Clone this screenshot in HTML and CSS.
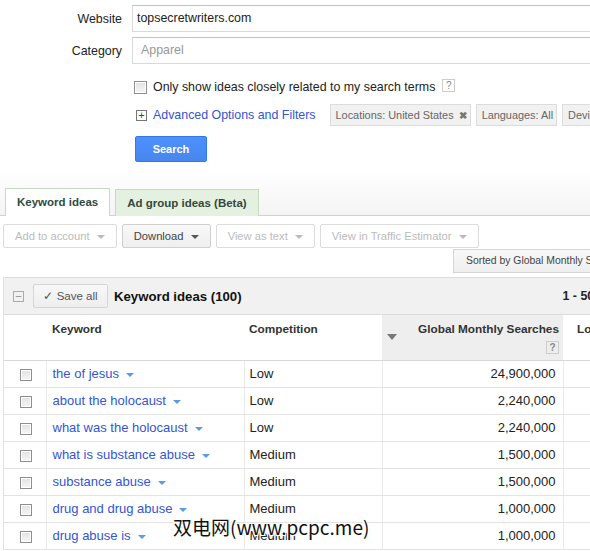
FILE: index.html
```html
<!DOCTYPE html>
<html>
<head>
    <title>Keyword Tool</title>
    <link rel="stylesheet" href="styles.css">
</head>
<body>
    <div class="search-form">
        <div class="form-row">
            <label class="form-label">Website</label>
            <div class="text-box">topsecretwriters.com</div>
        </div>
        <div class="form-row">
            <label class="form-label">Category</label>
            <div class="text-box placeholder">Apparel</div>
        </div>
        <div class="option-row">
            <span class="check big"></span>
            <span>Only show ideas closely related to my search terms</span>
            <span class="help">?</span>
        </div>
        <div class="filter-row">
            <span class="plus-box">+</span>
            <a class="link adv-link">Advanced Options and Filters</a>
            <span class="chip">Locations: United States <b class="chip-x">&#10006;</b></span>
            <span class="chip">Languages: All</span>
            <span class="chip">Devices: All</span>
        </div>
        <button class="search-btn">Search</button>
    </div>

    <div class="tab-bar">
        <div class="tab active">Keyword ideas</div>
        <div class="tab">Ad group ideas (Beta)</div>
    </div>

    <div class="toolbar">
        <span class="tool-btn disabled">Add to account <i class="caret"></i></span>
        <span class="tool-btn raised">Download <i class="caret dark"></i></span>
        <span class="tool-btn disabled">View as text <i class="caret"></i></span>
        <span class="tool-btn disabled">View in Traffic Estimator <i class="caret"></i></span>
    </div>
    <div class="sort-row">
        <span class="sort-btn">Sorted by Global Monthly Searches</span>
    </div>

    <div class="results">
        <div class="results-head">
            <span class="minus-box">&minus;</span>
            <span class="save-btn">&#10003; Save all</span>
            <span class="results-title">Keyword ideas (100)</span>
            <span class="paging">1 - 50 of 100</span>
        </div>
        <table class="grid">
            <tr class="grid-head">
                <th class="c-check"></th>
                <th class="c-kw">Keyword</th>
                <th class="c-comp">Competition</th>
                <th class="c-gms sorted">
                    <i class="sort-arrow"></i>
                    <div>Global Monthly Searches</div>
                    <span class="help small">?</span>
                </th>
                <th class="c-local">Local Monthly Searches</th>
            </tr>
            <tr>
                <td class="c-check"><span class="check"></span></td>
                <td class="c-kw"><a class="link">the of jesus</a><i class="caret blue"></i></td>
                <td class="c-comp">Low</td>
                <td class="c-gms">24,900,000</td>
                <td class="c-local"></td>
            </tr>
            <tr>
                <td class="c-check"><span class="check"></span></td>
                <td class="c-kw"><a class="link">about the holocaust</a><i class="caret blue"></i></td>
                <td class="c-comp">Low</td>
                <td class="c-gms">2,240,000</td>
                <td class="c-local"></td>
            </tr>
            <tr>
                <td class="c-check"><span class="check"></span></td>
                <td class="c-kw"><a class="link">what was the holocaust</a><i class="caret blue"></i></td>
                <td class="c-comp">Low</td>
                <td class="c-gms">2,240,000</td>
                <td class="c-local"></td>
            </tr>
            <tr>
                <td class="c-check"><span class="check"></span></td>
                <td class="c-kw"><a class="link">what is substance abuse</a><i class="caret blue"></i></td>
                <td class="c-comp">Medium</td>
                <td class="c-gms">1,500,000</td>
                <td class="c-local"></td>
            </tr>
            <tr>
                <td class="c-check"><span class="check"></span></td>
                <td class="c-kw"><a class="link">substance abuse</a><i class="caret blue"></i></td>
                <td class="c-comp">Medium</td>
                <td class="c-gms">1,500,000</td>
                <td class="c-local"></td>
            </tr>
            <tr>
                <td class="c-check"><span class="check"></span></td>
                <td class="c-kw"><a class="link">drug and drug abuse</a><i class="caret blue"></i></td>
                <td class="c-comp">Medium</td>
                <td class="c-gms">1,000,000</td>
                <td class="c-local"></td>
            </tr>
            <tr>
                <td class="c-check"><span class="check"></span></td>
                <td class="c-kw"><a class="link">drug abuse is</a><i class="caret blue"></i></td>
                <td class="c-comp">Medium</td>
                <td class="c-gms">1,000,000</td>
                <td class="c-local"></td>
            </tr>
        </table>
    </div>

    <div class="watermark">双电网(www.pcpc.me)</div>
</body>
</html>
```

FILE: styles.css
```css
* {
    box-sizing: border-box;
}
body {
    margin: 0;
    width: 590px;
    height: 551px;
    overflow: hidden;
    position: relative;
    background: #fff;
    color: #222;
    font-family: "Liberation Sans", Arial, sans-serif;
    font-size: 13px;
}
.link {
    color: #3355d6;
    text-decoration: none;
}

/* search form */
.search-form {
    padding-top: 5px;
    height: 170px;
    font-size: 12.4px;
}
.form-row {
    display: flex;
    align-items: center;
    margin-bottom: 5px;
}
.form-label {
    width: 122px;
    flex-shrink: 0;
    text-align: right;
    margin-right: 10px;
    color: #222;
}
.text-box {
    width: 600px;
    height: 27px;
    line-height: 25px;
    border: 1px solid #d9d9d9;
    border-top-color: #c0c0c0;
    padding-left: 4px;
    flex-shrink: 0;
}
.text-box.placeholder {
    color: #999;
    padding-left: 8px;
}
.option-row {
    display: flex;
    align-items: center;
    margin: 16px 0 0 134px;
    height: 14px;
    white-space: nowrap;
}
.check {
    display: inline-block;
    width: 12px;
    height: 12px;
    border: 1px solid #8e8e8e;
    background: linear-gradient(#e2e2e2, #f6f6f6);
    box-shadow: inset 0 0 0 1px #fff;
}
.check.big {
    width: 13px;
    height: 13px;
    margin-right: 6px;
}
.help {
    display: inline-block;
    width: 13px;
    height: 13px;
    line-height: 11px;
    border: 1px solid #ccc;
    color: #888;
    font-size: 10px;
    text-align: center;
    margin-left: 7px;
    margin-top: -3px;
}
.filter-row {
    display: flex;
    align-items: center;
    margin: 10px 0 0 136px;
    white-space: nowrap;
}
.plus-box {
    width: 11px;
    height: 11px;
    border: 1px solid #777;
    font-size: 11px;
    line-height: 8px;
    text-align: center;
    color: #444;
    margin-right: 6px;
    flex-shrink: 0;
}
.adv-link {
    margin-right: 14px;
}
.chip {
    height: 22px;
    line-height: 20px;
    padding: 0 3px 0 5px;
    margin-right: 5px;
    background: #f1f1f1;
    border: 1px solid #dcdcdc;
    color: #666;
    font-size: 10.9px;
    flex-shrink: 0;
}
.chip-x {
    color: #777;
    font-size: 10px;
    margin-left: 2px;
}
.search-btn {
    display: block;
    margin: 10px 0 0 135px;
    width: 72px;
    height: 26px;
    border: 1px solid #3079ed;
    border-radius: 2px;
    background: linear-gradient(#4d90fe, #4787ed);
    color: #fff;
    font-family: "Liberation Sans", Arial, sans-serif;
    font-size: 11px;
    font-weight: bold;
}

/* tabs and toolbar */
.tab-bar {
    display: flex;
    align-items: flex-end;
    height: 46px;
    padding-left: 5px;
    background: linear-gradient(#fff, #f4f4f4);
    border-bottom: 1px solid #c6dcc0;
}
.tab {
    height: 27px;
    line-height: 26px;
    padding: 0 11px;
    margin-right: 5px;
    border: 1px solid #c6dcc0;
    border-bottom: none;
    background: #e5f1e0;
    color: #34483c;
    font-weight: bold;
    font-size: 11.5px;
    margin-bottom: -1px;
}
.tab.active {
    background: #fff;
    height: 28px;
    color: #2f4a45;
}
.toolbar {
    display: flex;
    padding: 8px 0 0 3px;
    white-space: nowrap;
}
.tool-btn {
    height: 24px;
    line-height: 22px;
    padding: 0 11px;
    margin-right: 5px;
    border: 1px solid #dcdcdc;
    border-radius: 2px;
    background: #fff;
    font-size: 11.2px;
    color: #444;
}
.tool-btn.raised {
    background: linear-gradient(#f8f8f8, #efefef);
    border-color: #d0d0d0;
}
.tool-btn.disabled {
    color: #bbb;
}
.caret {
    display: inline-block;
    width: 0;
    height: 0;
    border-left: 4px solid transparent;
    border-right: 4px solid transparent;
    border-top: 4px solid #bbb;
    vertical-align: middle;
    margin-left: 4px;
}
.caret.dark {
    border-top-color: #555;
}
.caret.blue {
    border-top-color: #5b9be6;
    margin-left: 7px;
}
.sort-row {
    display: flex;
    padding: 1px 0 0 453px;
    height: 29px;
}
.sort-btn {
    height: 24px;
    line-height: 22px;
    padding: 0 12px;
    border: 1px solid #d5d5d5;
    background: linear-gradient(#f8f8f8, #efefef);
    font-size: 10.4px;
    color: #444;
    white-space: nowrap;
}

/* results table */
.results {
    margin-left: 3px;
    border-left: 1px solid #e0e0e0;
}
.results-head {
    display: flex;
    align-items: center;
    height: 38px;
    background: #f1f1f1;
    border-top: 1px solid #dcdcdc;
    border-bottom: 1px solid #dcdcdc;
    padding-left: 9px;
    white-space: nowrap;
}
.minus-box {
    width: 11px;
    height: 11px;
    border: 1px solid #aaa;
    font-size: 11px;
    line-height: 8px;
    text-align: center;
    color: #888;
    margin-right: 9px;
    flex-shrink: 0;
}
.save-btn {
    flex-shrink: 0;
    height: 24px;
    line-height: 22px;
    width: 75px;
    text-align: center;
    border: 1px solid #d5d5d5;
    border-radius: 2px;
    background: linear-gradient(#f8f8f8, #eee);
    font-size: 11.5px;
    color: #555;
    margin-right: 6px;
}
.results-title {
    flex-shrink: 0;
    font-size: 13.2px;
    font-weight: bold;
    color: #111;
}
.paging {
    flex-shrink: 0;
    margin-left: 321px;
    font-weight: bold;
    font-size: 12.4px;
    color: #222;
}
.grid {
    border-collapse: collapse;
    table-layout: fixed;
    width: 700px;
}
.grid td, .grid th {
    padding: 0;
    border-right: 1px solid #ebebeb;
    border-bottom: 1px solid #e3e3e3;
    white-space: nowrap;
    overflow: hidden;
}
.grid-head th {
    height: 45px;
    vertical-align: top;
    text-align: left;
    font-size: 11.8px;
    font-weight: bold;
    color: #333;
    padding-top: 7px;
    border-bottom: 1px solid #d8d8d8;
    border-right: none;
}
.grid-head th.sorted {
    background: #eee;
    text-align: right;
    padding-right: 4px;
    position: relative;
}
.sort-arrow {
    position: absolute;
    left: 5px;
    top: 19px;
    width: 0;
    height: 0;
    border-left: 5px solid transparent;
    border-right: 5px solid transparent;
    border-top: 6px solid #777;
}
.help.small {
    margin-top: 5px;
}
.grid td {
    height: 27px;
}
.c-check {
    width: 42px;
    text-align: center;
}
td.c-check .check {
    vertical-align: middle;
    margin-top: 1px;
    margin-left: 2px;
}
.c-kw {
    width: 198px;
}
.grid .c-kw {
    padding-left: 6px;
}
.c-comp {
    width: 138px;
}
.grid .c-comp {
    padding-left: 5px;
}
.c-gms {
    width: 181px;
}
.grid td.c-gms {
    text-align: right;
    padding-right: 7px;
}
.c-local {
    width: 141px;
}
.grid th.c-local {
    padding-left: 14px;
}
.watermark {
    position: absolute;
    left: 173px;
    top: 513px;
    font-family: "Noto Sans CJK SC", "DejaVu Sans", sans-serif;
    font-size: 19px;
    color: #111;
    text-shadow: -1px -1px 0 #fff, 1px -1px 0 #fff, -1px 1px 0 #fff, 1px 1px 0 #fff, 0 0 2px #fff;
}
```
